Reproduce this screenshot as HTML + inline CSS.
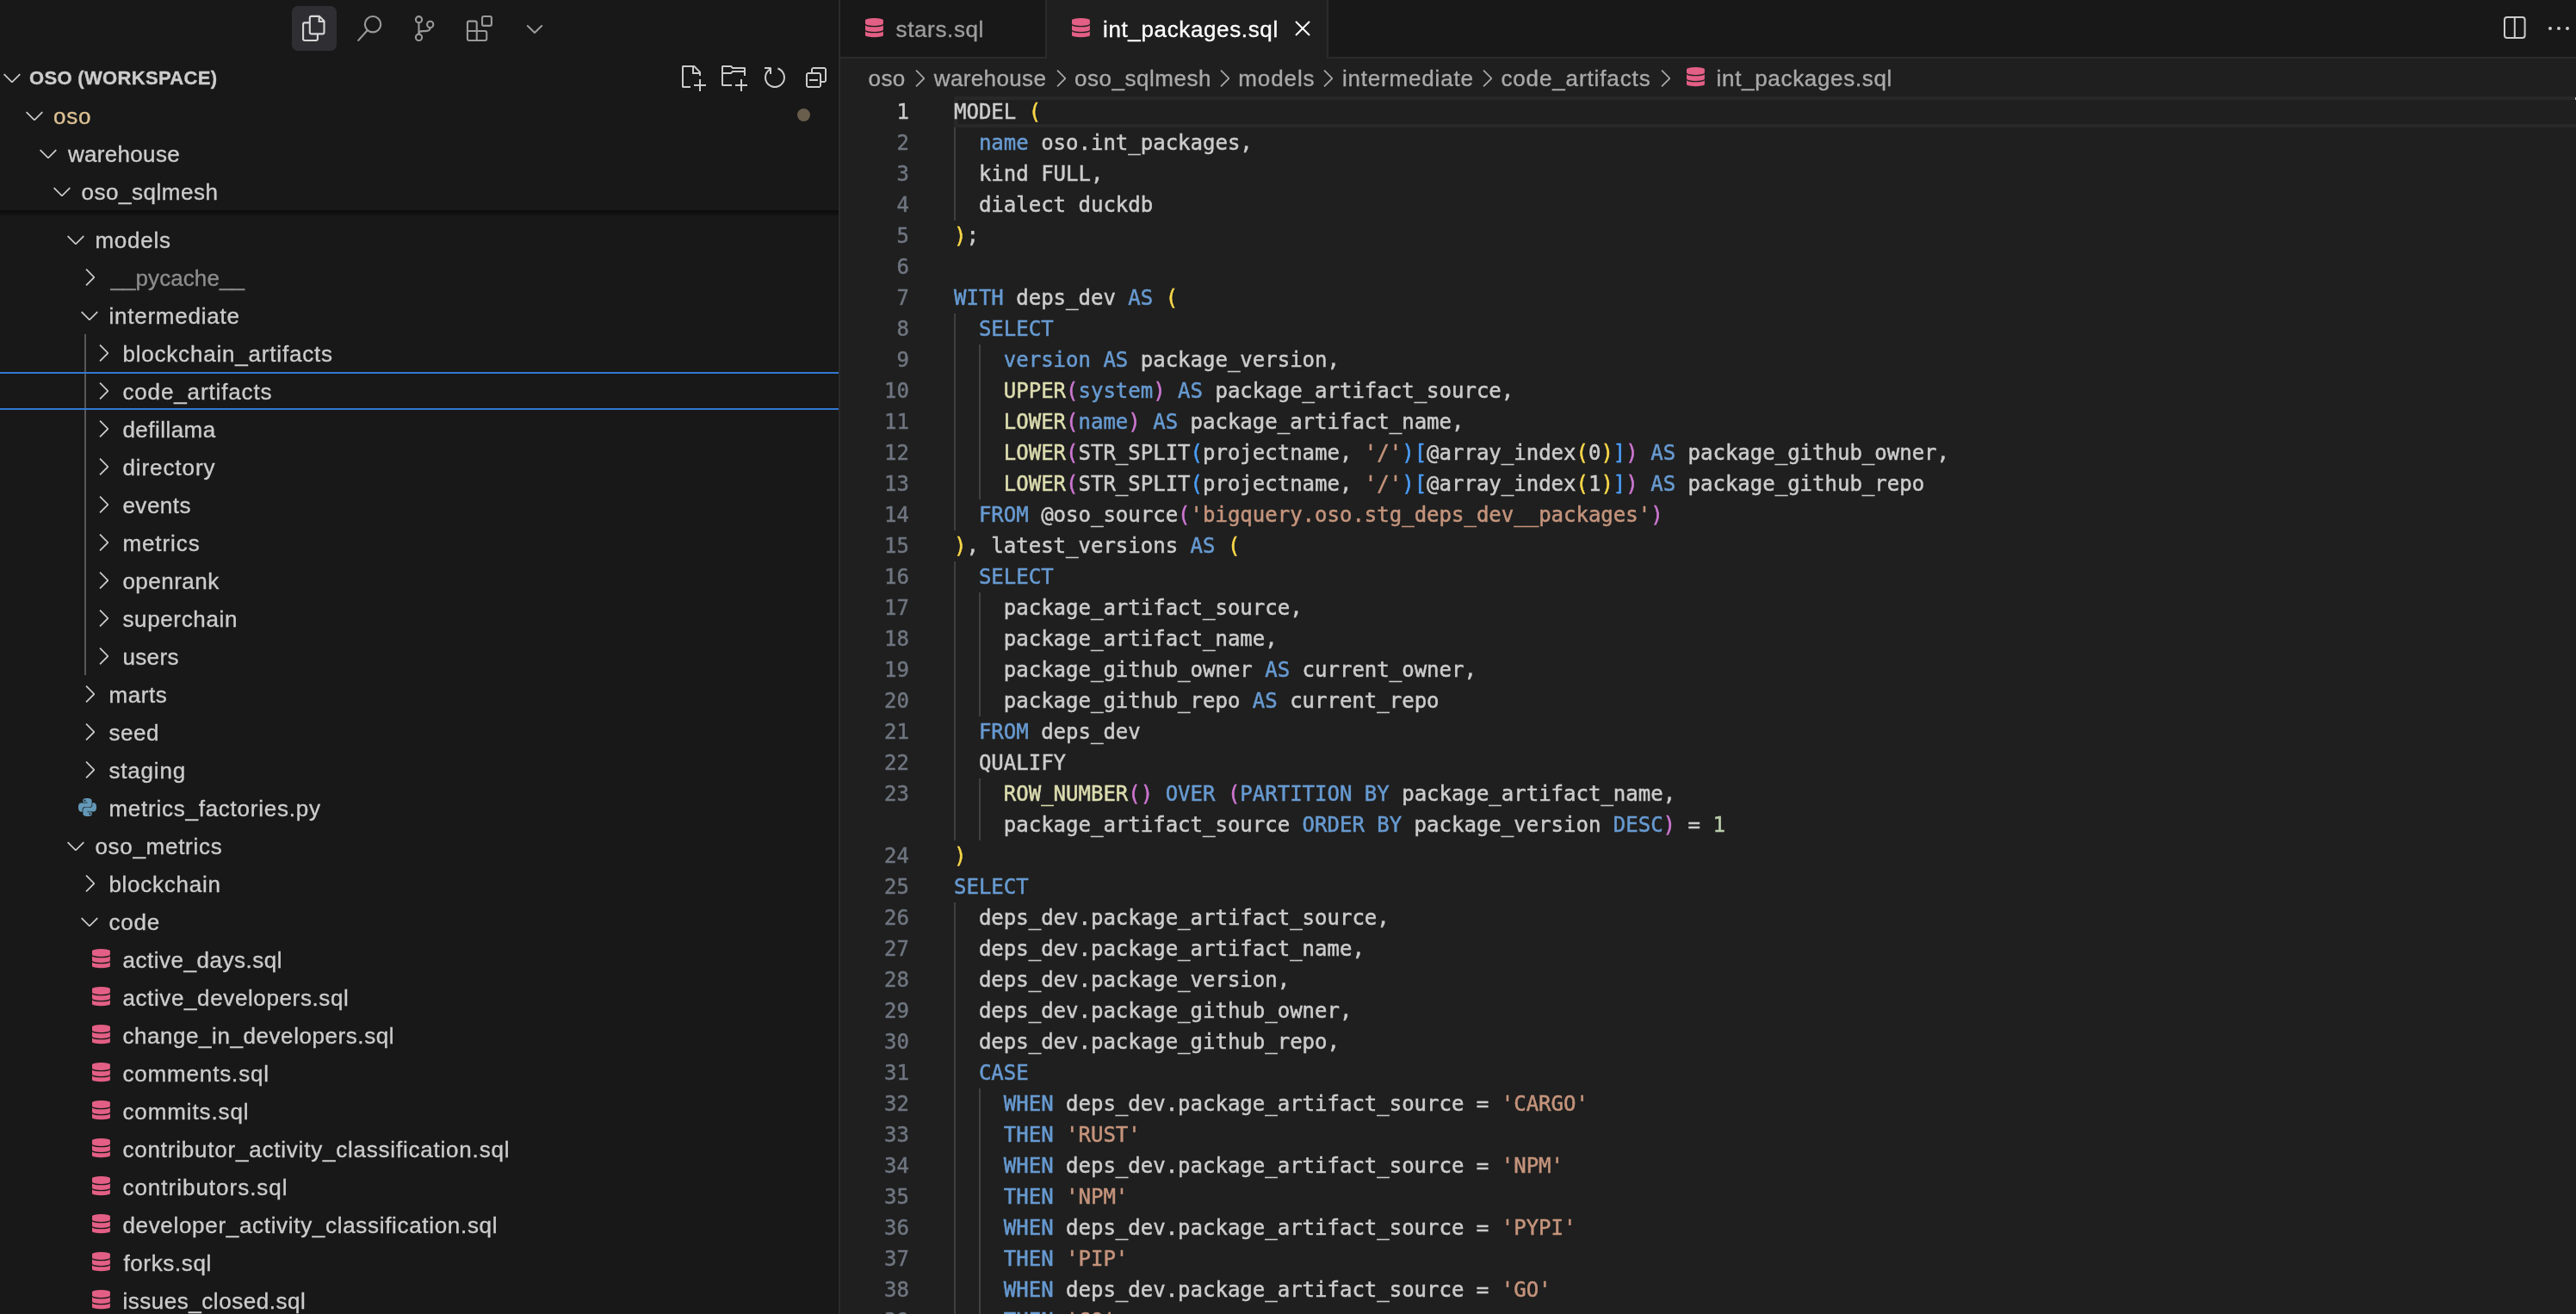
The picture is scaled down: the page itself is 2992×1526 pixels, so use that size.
<!DOCTYPE html><html><head><meta charset="utf-8"><title>int_packages.sql</title><style>

html,body{margin:0;padding:0;background:#181818;}
body{width:2992px;height:1526px;position:relative;overflow:hidden;font-family:'Liberation Sans', sans-serif;color:#cccccc;}
.a{position:absolute;}
.t{position:absolute;white-space:pre;line-height:44px;height:44px;-webkit-text-stroke:0.35px;}
svg{position:absolute;overflow:visible;}
#ed{position:absolute;left:976px;top:0;width:2016px;height:1526px;background:#1f1f1f;overflow:hidden;}
.ln{position:absolute;left:0;width:80px;-webkit-text-stroke:0.45px;text-align:right;font-family:'DejaVu Sans Mono', 'Liberation Mono', monospace;font-size:24px;line-height:36px;height:36px;color:#6f7680;white-space:pre;}
.cl{position:absolute;left:132px;-webkit-text-stroke:0.5px;font-family:'DejaVu Sans Mono', 'Liberation Mono', monospace;font-size:24px;line-height:36px;height:36px;color:#cccccc;white-space:pre;}
.k{color:#679ad1}.f{color:#dcdcaf}.s{color:#c5947c}.n{color:#bacdab}
.b1{color:#f9d849}.b2{color:#cc76d1}.b3{color:#4a9df8}
.g{position:absolute;width:2px;background:#404040;}

#w{position:absolute;left:0;top:0;width:2992px;height:1526px;will-change:transform;}
</style></head><body><div id="w">
<div class="a" style="left:974px;top:0;width:2px;height:1526px;background:#2b2b2b"></div>
<div class="a" style="left:339px;top:7px;width:52px;height:52px;border-radius:7px;background:#2f2e33"></div>
<svg style="left:0px;top:0px" width="976" height="68" viewBox="0 0 976 68" >
<g fill="none" stroke="#d7d7d7" stroke-width="2.1" stroke-linejoin="round" stroke-linecap="round">
<path d="M361.8 18.9 H371 L376.5 24.4 V37.4 a2 2 0 0 1 -2 2 H361.8 a2 2 0 0 1 -2 -2 V20.9 a2 2 0 0 1 2 -2 z"/>
<path d="M370.7 19.2 V25 H376.2" stroke-linecap="butt" stroke-linejoin="miter"/>
<path d="M359.8 26.4 H354.1 a2 2 0 0 0 -2 2 V45 a2 2 0 0 0 2 2 H366.9 a2 2 0 0 0 2 -2 V39.4" stroke-linecap="butt"/>
</g>
<g fill="none" stroke="#9a9a9a" stroke-width="2.1" stroke-linecap="round" stroke-linejoin="round">
<circle cx="433.05" cy="28.2" r="9.2"/><path d="M426.7 35.2 L416.2 46.9"/>
<circle cx="486.5" cy="22.7" r="3.6"/><circle cx="486.5" cy="43.4" r="3.6"/><circle cx="499.7" cy="28.4" r="3.6"/>
<path d="M486.5 26.4 V39.7"/><path d="M499.7 32.1 c0 3.6 -2.6 4 -5.4 4 h-3.4 c-2.4 0 -4.4 1.2 -4.4 3"/>
<rect x="560.05" y="19.05" width="10.85" height="10.85" rx="2"/>
<path d="M544.95 24.65 h6.8 a2 2 0 0 1 2 2 v9.35 h9.5 a2 2 0 0 1 2 2 v7.05 a2 2 0 0 1 -2 2 h-18.3 a2 2 0 0 1 -2 -2 v-18.4 a2 2 0 0 1 2 -2 z M542.95 36 h10.8 M553.75 36 v11.05"/>
<path d="M612.8 30 L621 38 L629.2 30"/>
</g></svg>
<div class="a" style="left:98px;top:388px;width:2px;height:396px;background:#585858"></div>
<div class="a" style="left:0;top:432px;width:974px;height:40px;border-top:2px solid #3378d2;border-bottom:2px solid #3378d2"></div>
<svg style="left:72.0px;top:262.0px" width="32" height="32" viewBox="0 0 16 16"><path fill="#cccccc" d="M7.976 10.072l4.357-4.357.62.618L8.284 11h-.618L3 6.333l.619-.618 4.357 4.357z"/></svg>
<svg style="left:88.0px;top:306.0px" width="32" height="32" viewBox="0 0 16 16"><path fill="#cccccc" d="M10.072 8.024L5.715 3.667l.618-.62L11 7.716v.618L6.333 13l-.618-.619 4.357-4.357z"/></svg>
<svg style="left:88.0px;top:350.0px" width="32" height="32" viewBox="0 0 16 16"><path fill="#cccccc" d="M7.976 10.072l4.357-4.357.62.618L8.284 11h-.618L3 6.333l.619-.618 4.357 4.357z"/></svg>
<svg style="left:104.0px;top:394.0px" width="32" height="32" viewBox="0 0 16 16"><path fill="#cccccc" d="M10.072 8.024L5.715 3.667l.618-.62L11 7.716v.618L6.333 13l-.618-.619 4.357-4.357z"/></svg>
<svg style="left:104.0px;top:438.0px" width="32" height="32" viewBox="0 0 16 16"><path fill="#cccccc" d="M10.072 8.024L5.715 3.667l.618-.62L11 7.716v.618L6.333 13l-.618-.619 4.357-4.357z"/></svg>
<svg style="left:104.0px;top:482.0px" width="32" height="32" viewBox="0 0 16 16"><path fill="#cccccc" d="M10.072 8.024L5.715 3.667l.618-.62L11 7.716v.618L6.333 13l-.618-.619 4.357-4.357z"/></svg>
<svg style="left:104.0px;top:526.0px" width="32" height="32" viewBox="0 0 16 16"><path fill="#cccccc" d="M10.072 8.024L5.715 3.667l.618-.62L11 7.716v.618L6.333 13l-.618-.619 4.357-4.357z"/></svg>
<svg style="left:104.0px;top:570.0px" width="32" height="32" viewBox="0 0 16 16"><path fill="#cccccc" d="M10.072 8.024L5.715 3.667l.618-.62L11 7.716v.618L6.333 13l-.618-.619 4.357-4.357z"/></svg>
<svg style="left:104.0px;top:614.0px" width="32" height="32" viewBox="0 0 16 16"><path fill="#cccccc" d="M10.072 8.024L5.715 3.667l.618-.62L11 7.716v.618L6.333 13l-.618-.619 4.357-4.357z"/></svg>
<svg style="left:104.0px;top:658.0px" width="32" height="32" viewBox="0 0 16 16"><path fill="#cccccc" d="M10.072 8.024L5.715 3.667l.618-.62L11 7.716v.618L6.333 13l-.618-.619 4.357-4.357z"/></svg>
<svg style="left:104.0px;top:702.0px" width="32" height="32" viewBox="0 0 16 16"><path fill="#cccccc" d="M10.072 8.024L5.715 3.667l.618-.62L11 7.716v.618L6.333 13l-.618-.619 4.357-4.357z"/></svg>
<svg style="left:104.0px;top:746.0px" width="32" height="32" viewBox="0 0 16 16"><path fill="#cccccc" d="M10.072 8.024L5.715 3.667l.618-.62L11 7.716v.618L6.333 13l-.618-.619 4.357-4.357z"/></svg>
<svg style="left:88.0px;top:790.0px" width="32" height="32" viewBox="0 0 16 16"><path fill="#cccccc" d="M10.072 8.024L5.715 3.667l.618-.62L11 7.716v.618L6.333 13l-.618-.619 4.357-4.357z"/></svg>
<svg style="left:88.0px;top:834.0px" width="32" height="32" viewBox="0 0 16 16"><path fill="#cccccc" d="M10.072 8.024L5.715 3.667l.618-.62L11 7.716v.618L6.333 13l-.618-.619 4.357-4.357z"/></svg>
<svg style="left:88.0px;top:878.0px" width="32" height="32" viewBox="0 0 16 16"><path fill="#cccccc" d="M10.072 8.024L5.715 3.667l.618-.62L11 7.716v.618L6.333 13l-.618-.619 4.357-4.357z"/></svg>
<svg style="left:91.0px;top:927.0px" width="21" height="21" viewBox="0 0 24 24"><path fill="#6398b7" d="M14.25.18l.9.2.73.26.59.3.45.32.34.34.25.34.16.33.1.3.04.26.02.2-.01.13V8.5l-.05.63-.13.55-.21.46-.26.38-.3.31-.33.25-.35.19-.35.14-.33.1-.3.07-.26.04-.21.02H8.77l-.69.05-.59.14-.5.22-.41.27-.33.32-.27.35-.2.36-.15.37-.1.35-.07.32-.04.27-.02.21v3.06H3.17l-.21-.03-.28-.07-.32-.12-.35-.18-.36-.26-.36-.36-.35-.46-.32-.59-.28-.73-.21-.88-.14-1.05-.05-1.23.06-1.22.16-1.04.24-.87.32-.71.36-.57.4-.44.42-.33.42-.24.4-.16.36-.1.32-.05.24-.01h.16l.06.01h8.16v-.83H6.18l-.01-2.75-.02-.37.05-.34.11-.31.17-.28.25-.26.31-.23.38-.2.44-.18.51-.15.58-.12.64-.1.71-.06.77-.04.84-.02 1.27.05zm-6.3 1.98l-.23.33-.08.41.08.41.23.34.33.22.41.09.41-.09.33-.22.23-.34.08-.41-.08-.41-.23-.33-.33-.22-.41-.09-.41.09zm13.09 3.95l.28.06.32.12.35.18.36.27.36.35.35.47.32.59.28.73.21.88.14 1.04.05 1.23-.06 1.23-.16 1.04-.24.86-.32.71-.36.57-.4.45-.42.33-.42.24-.4.16-.36.09-.32.05-.24.02-.16-.01h-8.22v.82h5.84l.01 2.76.02.36-.05.34-.11.31-.17.29-.25.25-.31.24-.38.2-.44.17-.51.15-.58.13-.64.09-.71.07-.77.04-.84.01-1.27-.04-1.07-.14-.9-.2-.73-.25-.59-.3-.45-.33-.34-.34-.25-.34-.16-.33-.1-.3-.04-.25-.02-.2.01-.13v-5.34l.05-.64.13-.54.21-.46.26-.38.3-.32.33-.24.35-.2.35-.14.33-.1.3-.06.26-.04.21-.02.13-.01h5.84l.69-.05.59-.14.5-.21.41-.28.33-.32.27-.35.2-.36.15-.36.1-.35.07-.32.04-.28.02-.21V6.07h2.09l.14.01zm-6.47 14.25l-.23.33-.08.41.08.41.23.33.33.23.41.08.41-.08.33-.23.23-.33.08-.41-.08-.41-.23-.33-.33-.23-.41-.08-.41.08z"/></svg>
<svg style="left:72.0px;top:966.0px" width="32" height="32" viewBox="0 0 16 16"><path fill="#cccccc" d="M7.976 10.072l4.357-4.357.62.618L8.284 11h-.618L3 6.333l.619-.618 4.357 4.357z"/></svg>
<svg style="left:88.0px;top:1010.0px" width="32" height="32" viewBox="0 0 16 16"><path fill="#cccccc" d="M10.072 8.024L5.715 3.667l.618-.62L11 7.716v.618L6.333 13l-.618-.619 4.357-4.357z"/></svg>
<svg style="left:88.0px;top:1054.0px" width="32" height="32" viewBox="0 0 16 16"><path fill="#cccccc" d="M7.976 10.072l4.357-4.357.62.618L8.284 11h-.618L3 6.333l.619-.618 4.357 4.357z"/></svg>
<svg style="left:107.0px;top:1102.2px" width="20.9" height="22.3" viewBox="0 0 21.4 22.6" preserveAspectRatio="none"><path fill="#e35f85" d="M0 2.4A10.7 2.4 0 0 1 21.4 2.4V6.6A10.7 2.4 0 0 1 0 6.6ZM0 8.1A10.7 2.4 0 0 0 21.4 8.1V13.7A10.7 2.4 0 0 1 0 13.7ZM0 15.2A10.7 2.4 0 0 0 21.4 15.2V20.2A10.7 2.4 0 0 1 0 20.2Z"/></svg>
<svg style="left:107.0px;top:1146.2px" width="20.9" height="22.3" viewBox="0 0 21.4 22.6" preserveAspectRatio="none"><path fill="#e35f85" d="M0 2.4A10.7 2.4 0 0 1 21.4 2.4V6.6A10.7 2.4 0 0 1 0 6.6ZM0 8.1A10.7 2.4 0 0 0 21.4 8.1V13.7A10.7 2.4 0 0 1 0 13.7ZM0 15.2A10.7 2.4 0 0 0 21.4 15.2V20.2A10.7 2.4 0 0 1 0 20.2Z"/></svg>
<svg style="left:107.0px;top:1190.2px" width="20.9" height="22.3" viewBox="0 0 21.4 22.6" preserveAspectRatio="none"><path fill="#e35f85" d="M0 2.4A10.7 2.4 0 0 1 21.4 2.4V6.6A10.7 2.4 0 0 1 0 6.6ZM0 8.1A10.7 2.4 0 0 0 21.4 8.1V13.7A10.7 2.4 0 0 1 0 13.7ZM0 15.2A10.7 2.4 0 0 0 21.4 15.2V20.2A10.7 2.4 0 0 1 0 20.2Z"/></svg>
<svg style="left:107.0px;top:1234.2px" width="20.9" height="22.3" viewBox="0 0 21.4 22.6" preserveAspectRatio="none"><path fill="#e35f85" d="M0 2.4A10.7 2.4 0 0 1 21.4 2.4V6.6A10.7 2.4 0 0 1 0 6.6ZM0 8.1A10.7 2.4 0 0 0 21.4 8.1V13.7A10.7 2.4 0 0 1 0 13.7ZM0 15.2A10.7 2.4 0 0 0 21.4 15.2V20.2A10.7 2.4 0 0 1 0 20.2Z"/></svg>
<svg style="left:107.0px;top:1278.2px" width="20.9" height="22.3" viewBox="0 0 21.4 22.6" preserveAspectRatio="none"><path fill="#e35f85" d="M0 2.4A10.7 2.4 0 0 1 21.4 2.4V6.6A10.7 2.4 0 0 1 0 6.6ZM0 8.1A10.7 2.4 0 0 0 21.4 8.1V13.7A10.7 2.4 0 0 1 0 13.7ZM0 15.2A10.7 2.4 0 0 0 21.4 15.2V20.2A10.7 2.4 0 0 1 0 20.2Z"/></svg>
<svg style="left:107.0px;top:1322.2px" width="20.9" height="22.3" viewBox="0 0 21.4 22.6" preserveAspectRatio="none"><path fill="#e35f85" d="M0 2.4A10.7 2.4 0 0 1 21.4 2.4V6.6A10.7 2.4 0 0 1 0 6.6ZM0 8.1A10.7 2.4 0 0 0 21.4 8.1V13.7A10.7 2.4 0 0 1 0 13.7ZM0 15.2A10.7 2.4 0 0 0 21.4 15.2V20.2A10.7 2.4 0 0 1 0 20.2Z"/></svg>
<svg style="left:107.0px;top:1366.2px" width="20.9" height="22.3" viewBox="0 0 21.4 22.6" preserveAspectRatio="none"><path fill="#e35f85" d="M0 2.4A10.7 2.4 0 0 1 21.4 2.4V6.6A10.7 2.4 0 0 1 0 6.6ZM0 8.1A10.7 2.4 0 0 0 21.4 8.1V13.7A10.7 2.4 0 0 1 0 13.7ZM0 15.2A10.7 2.4 0 0 0 21.4 15.2V20.2A10.7 2.4 0 0 1 0 20.2Z"/></svg>
<svg style="left:107.0px;top:1410.2px" width="20.9" height="22.3" viewBox="0 0 21.4 22.6" preserveAspectRatio="none"><path fill="#e35f85" d="M0 2.4A10.7 2.4 0 0 1 21.4 2.4V6.6A10.7 2.4 0 0 1 0 6.6ZM0 8.1A10.7 2.4 0 0 0 21.4 8.1V13.7A10.7 2.4 0 0 1 0 13.7ZM0 15.2A10.7 2.4 0 0 0 21.4 15.2V20.2A10.7 2.4 0 0 1 0 20.2Z"/></svg>
<svg style="left:107.0px;top:1454.2px" width="20.9" height="22.3" viewBox="0 0 21.4 22.6" preserveAspectRatio="none"><path fill="#e35f85" d="M0 2.4A10.7 2.4 0 0 1 21.4 2.4V6.6A10.7 2.4 0 0 1 0 6.6ZM0 8.1A10.7 2.4 0 0 0 21.4 8.1V13.7A10.7 2.4 0 0 1 0 13.7ZM0 15.2A10.7 2.4 0 0 0 21.4 15.2V20.2A10.7 2.4 0 0 1 0 20.2Z"/></svg>
<svg style="left:107.0px;top:1498.2px" width="20.9" height="22.3" viewBox="0 0 21.4 22.6" preserveAspectRatio="none"><path fill="#e35f85" d="M0 2.4A10.7 2.4 0 0 1 21.4 2.4V6.6A10.7 2.4 0 0 1 0 6.6ZM0 8.1A10.7 2.4 0 0 0 21.4 8.1V13.7A10.7 2.4 0 0 1 0 13.7ZM0 15.2A10.7 2.4 0 0 0 21.4 15.2V20.2A10.7 2.4 0 0 1 0 20.2Z"/></svg>
<div class="t" style="left:109.3px;top:212px;font-size:26px;color:#cccccc;letter-spacing:0.5px">macros</div>
<div class="a" style="left:0;top:112px;width:974px;height:132px;background:#181818"></div>
<div class="a" style="left:0;top:244px;width:974px;height:7px;background:linear-gradient(rgba(0,0,0,.42) 0%,rgba(0,0,0,.36) 55%,rgba(0,0,0,0) 100%)"></div>
<svg style="left:-2.0px;top:74.0px" width="32" height="32" viewBox="0 0 16 16"><path fill="#cccccc" d="M7.976 10.072l4.357-4.357.62.618L8.284 11h-.618L3 6.333l.619-.618 4.357 4.357z"/></svg>
<svg style="left:24.0px;top:118.0px" width="32" height="32" viewBox="0 0 16 16"><path fill="#cccccc" d="M7.976 10.072l4.357-4.357.62.618L8.284 11h-.618L3 6.333l.619-.618 4.357 4.357z"/></svg>
<svg style="left:40.0px;top:162.0px" width="32" height="32" viewBox="0 0 16 16"><path fill="#cccccc" d="M7.976 10.072l4.357-4.357.62.618L8.284 11h-.618L3 6.333l.619-.618 4.357 4.357z"/></svg>
<svg style="left:56.0px;top:206.0px" width="32" height="32" viewBox="0 0 16 16"><path fill="#cccccc" d="M7.976 10.072l4.357-4.357.62.618L8.284 11h-.618L3 6.333l.619-.618 4.357 4.357z"/></svg>
<div class="a" style="left:926px;top:126px;width:15.4px;height:15.4px;border-radius:50%;background:#695d4c"></div>
<svg style="left:788px;top:74px" width="32" height="32" viewBox="0 0 16 16"><path fill="#cccccc" fill-rule="evenodd" d="M9.5 1.1l3.4 3.5.1.4v2h-1V6H8V2H3v11h4v1H2.5l-.5-.5v-12l.5-.5h6.7l.3.1zM9 2v3h2.9L9 2zm4 14h-1v-3H9v-1h3V9h1v3h3v1h-3v3z"/></svg>
<svg style="left:836px;top:74px" width="32" height="32" viewBox="0 0 16 16"><path fill="#cccccc" fill-rule="evenodd" d="M14.5 2H7.71l-.85-.85L6.51 1h-5l-.5.5v11l.5.5H7v-1H1.99V6h4.49l.35-.15.86-.86H14v1.5l-.001.51h1.011V2.5L14.5 2zm-.51 2h-6.5l-.35.15-.86.86H2v-3h4.29l.85.85.36.15H14l-.01.99zM13 16h-1v-3H9v-1h3V9h1v3h3v1h-3v3z"/></svg>
<svg style="left:884px;top:74px" width="32" height="32" viewBox="0 0 16 16"><path fill="#cccccc" fill-rule="evenodd" d="M4.681 3H2V2h3.5l.5.5V6H5V4a5 5 0 1 0 4.53-.761l.302-.954A6 6 0 1 1 4.681 3z"/></svg>
<svg style="left:932px;top:74px" width="32" height="32" viewBox="0 0 16 16"><path fill="#cccccc" d="M9 9H4v1h5V9z"/><path fill="#cccccc" fill-rule="evenodd" d="M5 3l1-1h7l1 1v7l-1 1h-2v2l-1 1H3l-1-1V6l1-1h2V3zm1 2h4l1 1v4h2V3H6v2zm4 1H3v7h7V6z"/></svg>
<div id="ed">
<div class="a" style="left:0;top:0;width:2016px;height:66px;background:#181818"></div>
<div class="a" style="left:0;top:66px;width:2016px;height:2px;background:#2b2b2b"></div>
<div class="a" style="left:238px;top:0;width:2px;height:68px;background:#2b2b2b"></div>
<div class="a" style="left:240px;top:0;width:325px;height:68px;background:#1f1f1f"></div>
<div class="a" style="left:565px;top:0;width:2px;height:68px;background:#2b2b2b"></div>
<div class="a" style="left:132px;top:112px;width:1890px;height:28px;border:4px solid #282828"></div>
<div class="g" style="left:132px;top:148px;height:108px;background:#404040"></div>
<div class="g" style="left:132px;top:364px;height:252px;background:#404040"></div>
<div class="g" style="left:161px;top:400px;height:180px;background:#404040"></div>
<div class="g" style="left:132px;top:652px;height:324px;background:#404040"></div>
<div class="g" style="left:161px;top:688px;height:144px;background:#404040"></div>
<div class="g" style="left:161px;top:904px;height:72px;background:#404040"></div>
<div class="g" style="left:132px;top:1048px;height:504px;background:#404040"></div>
<div class="g" style="left:161px;top:1264px;height:288px;background:#404040"></div>
<div class="ln" style="top:112px;color:#cccccc">1</div>
<div class="cl" style="top:112px">MODEL <span class="b1">(</span></div>
<div class="ln" style="top:148px">2</div>
<div class="cl" style="top:148px">  <span class="k">name</span> oso.int_packages,</div>
<div class="ln" style="top:184px">3</div>
<div class="cl" style="top:184px">  kind FULL,</div>
<div class="ln" style="top:220px">4</div>
<div class="cl" style="top:220px">  dialect duckdb</div>
<div class="ln" style="top:256px">5</div>
<div class="cl" style="top:256px"><span class="b1">)</span>;</div>
<div class="ln" style="top:292px">6</div>
<div class="ln" style="top:328px">7</div>
<div class="cl" style="top:328px"><span class="k">WITH</span> deps_dev <span class="k">AS</span> <span class="b1">(</span></div>
<div class="ln" style="top:364px">8</div>
<div class="cl" style="top:364px">  <span class="k">SELECT</span></div>
<div class="ln" style="top:400px">9</div>
<div class="cl" style="top:400px">    <span class="k">version</span> <span class="k">AS</span> package_version,</div>
<div class="ln" style="top:436px">10</div>
<div class="cl" style="top:436px">    <span class="f">UPPER</span><span class="b2">(</span><span class="k">system</span><span class="b2">)</span> <span class="k">AS</span> package_artifact_source,</div>
<div class="ln" style="top:472px">11</div>
<div class="cl" style="top:472px">    <span class="f">LOWER</span><span class="b2">(</span><span class="k">name</span><span class="b2">)</span> <span class="k">AS</span> package_artifact_name,</div>
<div class="ln" style="top:508px">12</div>
<div class="cl" style="top:508px">    <span class="f">LOWER</span><span class="b2">(</span>STR_SPLIT<span class="b3">(</span>projectname, <span class="s">'/'</span><span class="b3">)</span><span class="b3">[</span>@array_index<span class="b1">(</span>0<span class="b1">)</span><span class="b3">]</span><span class="b2">)</span> <span class="k">AS</span> package_github_owner,</div>
<div class="ln" style="top:544px">13</div>
<div class="cl" style="top:544px">    <span class="f">LOWER</span><span class="b2">(</span>STR_SPLIT<span class="b3">(</span>projectname, <span class="s">'/'</span><span class="b3">)</span><span class="b3">[</span>@array_index<span class="b1">(</span>1<span class="b1">)</span><span class="b3">]</span><span class="b2">)</span> <span class="k">AS</span> package_github_repo</div>
<div class="ln" style="top:580px">14</div>
<div class="cl" style="top:580px">  <span class="k">FROM</span> @oso_source<span class="b2">(</span><span class="s">'bigquery.oso.stg_deps_dev__packages'</span><span class="b2">)</span></div>
<div class="ln" style="top:616px">15</div>
<div class="cl" style="top:616px"><span class="b1">)</span>, latest_versions <span class="k">AS</span> <span class="b1">(</span></div>
<div class="ln" style="top:652px">16</div>
<div class="cl" style="top:652px">  <span class="k">SELECT</span></div>
<div class="ln" style="top:688px">17</div>
<div class="cl" style="top:688px">    package_artifact_source,</div>
<div class="ln" style="top:724px">18</div>
<div class="cl" style="top:724px">    package_artifact_name,</div>
<div class="ln" style="top:760px">19</div>
<div class="cl" style="top:760px">    package_github_owner <span class="k">AS</span> current_owner,</div>
<div class="ln" style="top:796px">20</div>
<div class="cl" style="top:796px">    package_github_repo <span class="k">AS</span> current_repo</div>
<div class="ln" style="top:832px">21</div>
<div class="cl" style="top:832px">  <span class="k">FROM</span> deps_dev</div>
<div class="ln" style="top:868px">22</div>
<div class="cl" style="top:868px">  QUALIFY</div>
<div class="ln" style="top:904px">23</div>
<div class="cl" style="top:904px">    <span class="f">ROW_NUMBER</span><span class="b2">()</span> <span class="k">OVER</span> <span class="b2">(</span><span class="k">PARTITION BY</span> package_artifact_name,</div>
<div class="cl" style="top:940px">    package_artifact_source <span class="k">ORDER BY</span> package_version <span class="k">DESC</span><span class="b2">)</span> = <span class="n">1</span></div>
<div class="ln" style="top:976px">24</div>
<div class="cl" style="top:976px"><span class="b1">)</span></div>
<div class="ln" style="top:1012px">25</div>
<div class="cl" style="top:1012px"><span class="k">SELECT</span></div>
<div class="ln" style="top:1048px">26</div>
<div class="cl" style="top:1048px">  deps_dev.package_artifact_source,</div>
<div class="ln" style="top:1084px">27</div>
<div class="cl" style="top:1084px">  deps_dev.package_artifact_name,</div>
<div class="ln" style="top:1120px">28</div>
<div class="cl" style="top:1120px">  deps_dev.package_version,</div>
<div class="ln" style="top:1156px">29</div>
<div class="cl" style="top:1156px">  deps_dev.package_github_owner,</div>
<div class="ln" style="top:1192px">30</div>
<div class="cl" style="top:1192px">  deps_dev.package_github_repo,</div>
<div class="ln" style="top:1228px">31</div>
<div class="cl" style="top:1228px">  <span class="k">CASE</span></div>
<div class="ln" style="top:1264px">32</div>
<div class="cl" style="top:1264px">    <span class="k">WHEN</span> deps_dev.package_artifact_source = <span class="s">'CARGO'</span></div>
<div class="ln" style="top:1300px">33</div>
<div class="cl" style="top:1300px">    <span class="k">THEN</span> <span class="s">'RUST'</span></div>
<div class="ln" style="top:1336px">34</div>
<div class="cl" style="top:1336px">    <span class="k">WHEN</span> deps_dev.package_artifact_source = <span class="s">'NPM'</span></div>
<div class="ln" style="top:1372px">35</div>
<div class="cl" style="top:1372px">    <span class="k">THEN</span> <span class="s">'NPM'</span></div>
<div class="ln" style="top:1408px">36</div>
<div class="cl" style="top:1408px">    <span class="k">WHEN</span> deps_dev.package_artifact_source = <span class="s">'PYPI'</span></div>
<div class="ln" style="top:1444px">37</div>
<div class="cl" style="top:1444px">    <span class="k">THEN</span> <span class="s">'PIP'</span></div>
<div class="ln" style="top:1480px">38</div>
<div class="cl" style="top:1480px">    <span class="k">WHEN</span> deps_dev.package_artifact_source = <span class="s">'GO'</span></div>
<div class="ln" style="top:1516px">39</div>
<div class="cl" style="top:1516px">    <span class="k">THEN</span> <span class="s">'GO'</span></div>
<svg style="left:76.3px;top:75.4px" width="32" height="32" viewBox="0 0 16 16"><path fill="#a9a9a9" d="M10.072 8.024L5.715 3.667l.618-.62L11 7.716v.618L6.333 13l-.618-.619 4.357-4.357z"/></svg>
<svg style="left:239.8px;top:75.4px" width="32" height="32" viewBox="0 0 16 16"><path fill="#a9a9a9" d="M10.072 8.024L5.715 3.667l.618-.62L11 7.716v.618L6.333 13l-.618-.619 4.357-4.357z"/></svg>
<svg style="left:429.8px;top:75.4px" width="32" height="32" viewBox="0 0 16 16"><path fill="#a9a9a9" d="M10.072 8.024L5.715 3.667l.618-.62L11 7.716v.618L6.333 13l-.618-.619 4.357-4.357z"/></svg>
<svg style="left:549.8px;top:75.4px" width="32" height="32" viewBox="0 0 16 16"><path fill="#a9a9a9" d="M10.072 8.024L5.715 3.667l.618-.62L11 7.716v.618L6.333 13l-.618-.619 4.357-4.357z"/></svg>
<svg style="left:735.1px;top:75.4px" width="32" height="32" viewBox="0 0 16 16"><path fill="#a9a9a9" d="M10.072 8.024L5.715 3.667l.618-.62L11 7.716v.618L6.333 13l-.618-.619 4.357-4.357z"/></svg>
<svg style="left:941.5px;top:75.4px" width="32" height="32" viewBox="0 0 16 16"><path fill="#a9a9a9" d="M10.072 8.024L5.715 3.667l.618-.62L11 7.716v.618L6.333 13l-.618-.619 4.357-4.357z"/></svg>
<svg style="left:982.5px;top:78.4px" width="20.9" height="22.3" viewBox="0 0 21.4 22.6" preserveAspectRatio="none"><path fill="#e35f85" d="M0 2.4A10.7 2.4 0 0 1 21.4 2.4V6.6A10.7 2.4 0 0 1 0 6.6ZM0 8.1A10.7 2.4 0 0 0 21.4 8.1V13.7A10.7 2.4 0 0 1 0 13.7ZM0 15.2A10.7 2.4 0 0 0 21.4 15.2V20.2A10.7 2.4 0 0 1 0 20.2Z"/></svg>
<svg style="left:28.8px;top:21.3px" width="20.9" height="22.3" viewBox="0 0 21.4 22.6" preserveAspectRatio="none"><path fill="#e35f85" d="M0 2.4A10.7 2.4 0 0 1 21.4 2.4V6.6A10.7 2.4 0 0 1 0 6.6ZM0 8.1A10.7 2.4 0 0 0 21.4 8.1V13.7A10.7 2.4 0 0 1 0 13.7ZM0 15.2A10.7 2.4 0 0 0 21.4 15.2V20.2A10.7 2.4 0 0 1 0 20.2Z"/></svg>
<svg style="left:269.1px;top:21.3px" width="20.9" height="22.3" viewBox="0 0 21.4 22.6" preserveAspectRatio="none"><path fill="#e35f85" d="M0 2.4A10.7 2.4 0 0 1 21.4 2.4V6.6A10.7 2.4 0 0 1 0 6.6ZM0 8.1A10.7 2.4 0 0 0 21.4 8.1V13.7A10.7 2.4 0 0 1 0 13.7ZM0 15.2A10.7 2.4 0 0 0 21.4 15.2V20.2A10.7 2.4 0 0 1 0 20.2Z"/></svg>
<svg style="left:521px;top:17.299999999999997px" width="32" height="32" viewBox="0 0 16 16"><path fill="#ffffff" fill-rule="evenodd" d="M8 8.707l3.646 3.647.708-.707L8.707 8l3.647-3.646-.707-.708L8 7.293 4.354 3.646l-.707.708L7.293 8l-3.646 3.646.707.708L8 8.707z"/></svg>
<svg style="left:1924px;top:10px" width="92" height="50" viewBox="0 0 92 50" ><g fill="none" stroke="#cccccc" stroke-width="2"><rect x="9" y="10" width="23.6" height="24" rx="3"/><path d="M20.8 10 V34"/></g>
<g fill="#cccccc"><circle cx="62" cy="23" r="2"/><circle cx="72" cy="23" r="2"/><circle cx="82" cy="23" r="2"/></g></svg>
<div class="a" style="left:2014.5px;top:112.5px;width:1.5px;height:3.5px;background:#bdbdbd"></div>
</div>
<div class="t" style="left:34.1px;top:69.0px;font-size:22px;font-weight:700;color:#cccccc;letter-spacing:0.314px">OSO (WORKSPACE)</div>
<div class="t" style="left:62.1px;top:113.0px;font-size:26px;font-weight:400;color:#dcc193;letter-spacing:0.75px">oso</div>
<div class="t" style="left:78.9px;top:157.0px;font-size:26px;font-weight:400;color:#cccccc;letter-spacing:0.325px">warehouse</div>
<div class="t" style="left:94.6px;top:201.0px;font-size:26px;font-weight:400;color:#cccccc;letter-spacing:0.51px">oso_sqlmesh</div>
<div class="t" style="left:110.4px;top:257.0px;font-size:26px;font-weight:400;color:#cccccc;letter-spacing:0.76px">models</div>
<div class="t" style="left:128.4px;top:301.0px;font-size:26px;font-weight:400;color:#8c8c8c;letter-spacing:0.09px">__pycache__</div>
<div class="t" style="left:126.4px;top:345.0px;font-size:26px;font-weight:400;color:#cccccc;letter-spacing:0.773px">intermediate</div>
<div class="t" style="left:142.4px;top:389.0px;font-size:26px;font-weight:400;color:#cccccc;letter-spacing:0.805px">blockchain_artifacts</div>
<div class="t" style="left:142.4px;top:433.0px;font-size:26px;font-weight:400;color:#cccccc;letter-spacing:0.869px">code_artifacts</div>
<div class="t" style="left:142.4px;top:477.0px;font-size:26px;font-weight:400;color:#cccccc;letter-spacing:0.462px">defillama</div>
<div class="t" style="left:142.4px;top:521.0px;font-size:26px;font-weight:400;color:#cccccc;letter-spacing:0.925px">directory</div>
<div class="t" style="left:142.4px;top:565.0px;font-size:26px;font-weight:400;color:#cccccc;letter-spacing:0.52px">events</div>
<div class="t" style="left:142.4px;top:609.0px;font-size:26px;font-weight:400;color:#cccccc;letter-spacing:0.933px">metrics</div>
<div class="t" style="left:142.4px;top:653.0px;font-size:26px;font-weight:400;color:#cccccc;letter-spacing:0.486px">openrank</div>
<div class="t" style="left:142.4px;top:697.0px;font-size:26px;font-weight:400;color:#cccccc;letter-spacing:0.644px">superchain</div>
<div class="t" style="left:142.4px;top:741.0px;font-size:26px;font-weight:400;color:#cccccc;letter-spacing:0.375px">users</div>
<div class="t" style="left:126.4px;top:785.0px;font-size:26px;font-weight:400;color:#cccccc;letter-spacing:0.6px">marts</div>
<div class="t" style="left:126.4px;top:829.0px;font-size:26px;font-weight:400;color:#cccccc;letter-spacing:0.567px">seed</div>
<div class="t" style="left:126.4px;top:873.0px;font-size:26px;font-weight:400;color:#cccccc;letter-spacing:0.817px">staging</div>
<div class="t" style="left:126.4px;top:917.0px;font-size:26px;font-weight:400;color:#cccccc;letter-spacing:0.753px">metrics_factories.py</div>
<div class="t" style="left:110.4px;top:961.0px;font-size:26px;font-weight:400;color:#cccccc;letter-spacing:0.71px">oso_metrics</div>
<div class="t" style="left:126.4px;top:1005.0px;font-size:26px;font-weight:400;color:#cccccc;letter-spacing:0.744px">blockchain</div>
<div class="t" style="left:126.4px;top:1049.0px;font-size:26px;font-weight:400;color:#cccccc;letter-spacing:0.8px">code</div>
<div class="t" style="left:142.4px;top:1093.0px;font-size:26px;font-weight:400;color:#cccccc;letter-spacing:0.529px">active_days.sql</div>
<div class="t" style="left:142.4px;top:1137.0px;font-size:26px;font-weight:400;color:#cccccc;letter-spacing:0.62px">active_developers.sql</div>
<div class="t" style="left:142.4px;top:1181.0px;font-size:26px;font-weight:400;color:#cccccc;letter-spacing:0.565px">change_in_developers.sql</div>
<div class="t" style="left:142.4px;top:1225.0px;font-size:26px;font-weight:400;color:#cccccc;letter-spacing:0.845px">comments.sql</div>
<div class="t" style="left:142.4px;top:1269.0px;font-size:26px;font-weight:400;color:#cccccc;letter-spacing:0.89px">commits.sql</div>
<div class="t" style="left:142.4px;top:1313.0px;font-size:26px;font-weight:400;color:#cccccc;letter-spacing:0.789px">contributor_activity_classification.sql</div>
<div class="t" style="left:142.4px;top:1357.0px;font-size:26px;font-weight:400;color:#cccccc;letter-spacing:0.993px">contributors.sql</div>
<div class="t" style="left:142.4px;top:1401.0px;font-size:26px;font-weight:400;color:#cccccc;letter-spacing:0.686px">developer_activity_classification.sql</div>
<div class="t" style="left:143.4px;top:1445.0px;font-size:26px;font-weight:400;color:#cccccc;letter-spacing:0.65px">forks.sql</div>
<div class="t" style="left:142.4px;top:1489.0px;font-size:26px;font-weight:400;color:#cccccc;letter-spacing:0.537px">issues_closed.sql</div>
<div class="t" style="left:1040.5px;top:12.0px;font-size:26px;font-weight:400;color:#9d9d9d;letter-spacing:0.637px">stars.sql</div>
<div class="t" style="left:1281px;top:12.0px;font-size:26px;font-weight:400;color:#ffffff;letter-spacing:0.633px">int_packages.sql</div>
<div class="t" style="left:1008.6px;top:69.0px;font-size:26px;font-weight:400;color:#a9a9a9;letter-spacing:0.35px">oso</div>
<div class="t" style="left:1084.8px;top:69.0px;font-size:26px;font-weight:400;color:#a9a9a9;letter-spacing:0.363px">warehouse</div>
<div class="t" style="left:1248px;top:69.0px;font-size:26px;font-weight:400;color:#a9a9a9;letter-spacing:0.52px">oso_sqlmesh</div>
<div class="t" style="left:1438.2px;top:69.0px;font-size:26px;font-weight:400;color:#a9a9a9;letter-spacing:0.92px">models</div>
<div class="t" style="left:1559px;top:69.0px;font-size:26px;font-weight:400;color:#a9a9a9;letter-spacing:0.8px">intermediate</div>
<div class="t" style="left:1743.4px;top:69.0px;font-size:26px;font-weight:400;color:#a9a9a9;letter-spacing:0.877px">code_artifacts</div>
<div class="t" style="left:1993.6px;top:69.0px;font-size:26px;font-weight:400;color:#a9a9a9;letter-spacing:0.673px">int_packages.sql</div>
</div></body></html>
